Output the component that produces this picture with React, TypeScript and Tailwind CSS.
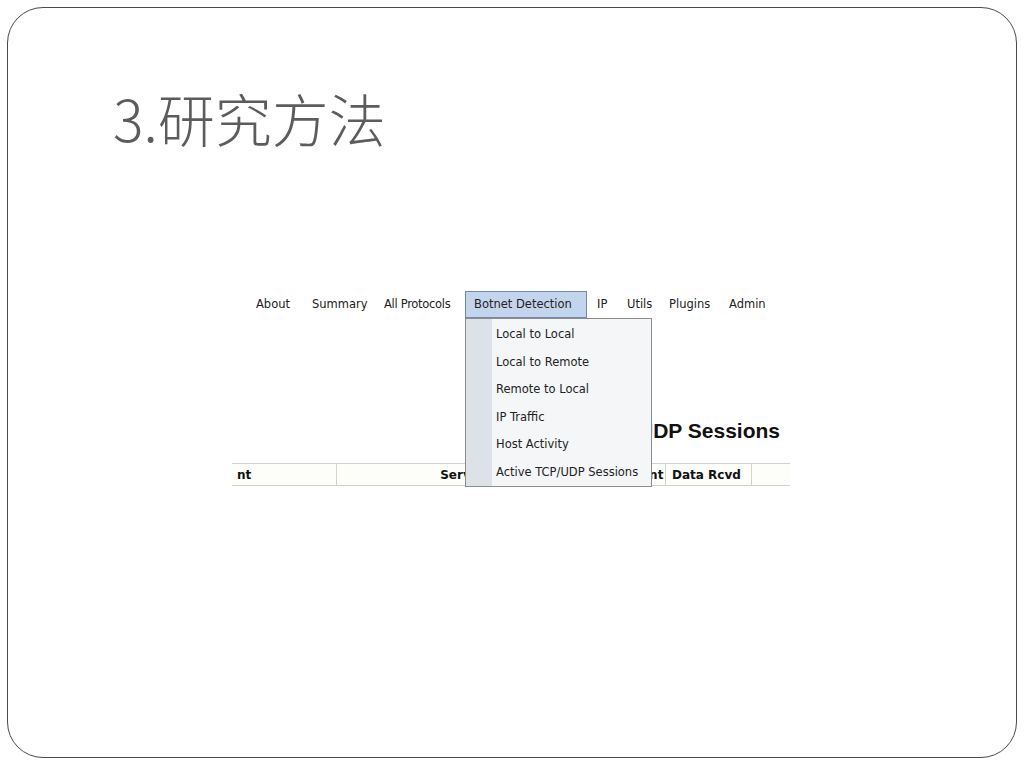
const MENU_ITEMS = [
  "Local to Local",
  "Local to Remote",
  "Remote to Local",
  "IP Traffic",
  "Host Activity",
  "Active TCP/UDP Sessions",
];

const ui = { fontFamily: '"DejaVu Sans", Verdana, sans-serif' };

export default function App() {
  return (
    <div className="h-[768px] w-[1024px] bg-white pl-[7px] pt-[7px]">
      <div className="h-[751px] w-[1010px] rounded-[36px] border border-[#4a4a4a]">
        {/* Title */}
        <h1
          className="ml-[105px] mt-[77px] text-[57px] font-light leading-[64px] text-[#5c5c5c]"
          style={{ fontFamily: '"Noto Sans CJK SC", "Noto Sans", sans-serif' }}
        >
          3.研究方法
        </h1>

        {/* Screenshot of the web UI */}
        <div className="relative ml-[224px] mt-[131px] h-[210px] w-[558px] bg-white" style={ui}>
          {/* Menu bar */}
          <div className="flex h-[38px] items-start pt-[12px] text-[11.5px] text-[#222]">
            <span className="w-[24px]" />
            <span className="flex h-[26px] w-[56px] items-center">About</span>
            <span className="flex h-[26px] w-[72px] items-center">Summary</span>
            <span className="flex h-[26px] w-[81px] items-center tracking-[-0.3px]">All Protocols</span>
            <span className="-mt-[1px] flex h-[27px] w-[122px] items-center border border-[#7089ad] bg-[#c3d5ec] pl-[8px]">
              Botnet Detection
            </span>
            <span className="w-[10px]" />
            <span className="flex h-[26px] w-[30px] items-center">IP</span>
            <span className="flex h-[26px] w-[42px] items-center">Utils</span>
            <span className="flex h-[26px] w-[60px] items-center">Plugins</span>
            <span className="flex h-[26px] items-center">Admin</span>
          </div>

          {/* Page heading */}
          <div
            className="mt-[101px] h-[24px] pr-[10px] text-right text-[21px] font-bold leading-[24px] text-[#111]"
            style={{ fontFamily: '"Liberation Sans", Arial, sans-serif' }}
          >
            Active TCP/UDP Sessions
          </div>

          {/* Table header */}
          <div className="mt-[20px] flex h-[23px] border-y border-[#d2d2c8] bg-[#fdfdf9] text-[12px] font-bold text-[#111]">
            <div className="flex w-[105px] items-center border-r border-[#d2d2c8] pl-[5px]">nt</div>
            <div className="flex w-[252px] items-center justify-center overflow-hidden border-r border-[#d2d2c8]">
              Server
            </div>
            <div className="flex w-[77px] items-center justify-end overflow-hidden whitespace-nowrap border-r border-[#d2d2c8] pr-[1px] tracking-[0.4px]">
              Data Sent
            </div>
            <div className="flex w-[86px] items-center border-r border-[#d2d2c8] pl-[6px]">Data Rcvd</div>
            <div className="flex-1" />
          </div>

          {/* Dropdown menu */}
          <div className="absolute left-[233px] top-[38px] flex h-[169px] w-[187px] border border-[#8c8c8c] bg-[#f5f6f8] text-[11.5px] text-[#222]">
            <div className="w-[26px] bg-[#dde1e8]" />
            <div className="flex flex-1 flex-col pl-[4px] pt-[2px]">
              {MENU_ITEMS.map((item) => (
                <div key={item} className="flex h-[27.6px] items-center">
                  {item}
                </div>
              ))}
            </div>
          </div>
        </div>
      </div>
    </div>
  );
}
